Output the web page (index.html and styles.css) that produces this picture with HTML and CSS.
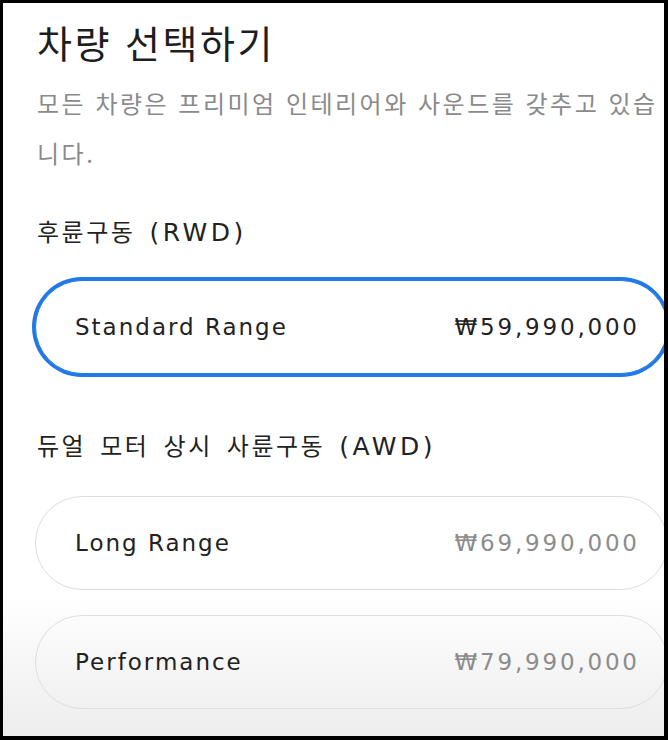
FILE: index.html
```html
<!DOCTYPE html>
<html lang="ko">
<head>
<meta charset="utf-8">
<title>차량 선택하기</title>
<link rel="stylesheet" href="styles.css">
</head>
<body>
<div class="screen">
  <div class="content">
    <h1 class="title">차량 선택하기</h1>
    <p class="subtitle">모든 차량은 프리미엄 인테리어와 사운드를 갖추고 있습니다.</p>

    <h2 class="group-title">후륜구동 <span class="latin">(RWD)</span></h2>
    <div class="option selected">
      <span class="name">Standard Range</span>
      <span class="price">₩59,990,000</span>
    </div>

    <h2 class="group-title awd">듀얼 모터 상시 사륜구동 <span class="latin">(AWD)</span></h2>
    <div class="options">
      <div class="option">
        <span class="name">Long Range</span>
        <span class="price">₩69,990,000</span>
      </div>
      <div class="option">
        <span class="name">Performance</span>
        <span class="price">₩79,990,000</span>
      </div>
    </div>
  </div>
</div>
</body>
</html>
```

FILE: styles.css
```css
* { box-sizing: border-box; }

html, body {
  margin: 0;
  height: 740px;
  background: #000;
}

body {
  padding: 3px 4px 4px 3px;
  font-family: "DejaVu Sans", "Noto Sans CJK KR", sans-serif;
}

.screen {
  width: 661px;
  height: 733px;
  background: linear-gradient(#fff 0, #fff 590px, #ededed 733px);
  overflow: hidden;
}

.content {
  padding: 15px 4px 0 34px;
}

.title {
  margin: 0;
  font-family: "Noto Sans CJK KR", sans-serif;
  font-weight: 400;
  font-size: 38px;
  line-height: 48px;
  letter-spacing: 2.5px;
  color: #1e1e1e;
}

.subtitle {
  margin: 12px 0 0;
  font-family: "Noto Sans CJK KR", sans-serif;
  font-size: 24px;
  line-height: 50px;
  letter-spacing: 2.5px;
  color: #8a8a8a;
}

.group-title {
  margin: 39px 0 0;
  font-weight: 400;
  font-size: 24px;
  line-height: 32px;
  color: #222;
  letter-spacing: 2.5px;
  word-spacing: 4px;
}

.group-title .latin {
  font-size: 25px;
  letter-spacing: 3.5px;
}

.group-title.awd {
  margin-top: 57px;
}

.option {
  display: flex;
  align-items: center;
  justify-content: space-between;
  width: 633px;
  height: 94px;
  margin: 31px 0 0 -2px;
  padding: 0 30px 0 39px;
  border: 1px solid #dedede;
  border-radius: 47px;
  font-size: 23px;
  color: #222;
}

.option .name {
  letter-spacing: 2px;
}

.option .price {
  letter-spacing: 2.8px;
  margin-right: -2.8px;
}

.option.selected {
  background: #fff;
  border-color: #2079e4;
  box-shadow: 0 0 0 3px #2079e4;
}

.options {
  display: flex;
  flex-direction: column;
  gap: 25px;
  margin-top: 33px;
}

.options .option {
  margin-top: 0;
}

.options .price {
  color: #8c8c8c;
}
```
